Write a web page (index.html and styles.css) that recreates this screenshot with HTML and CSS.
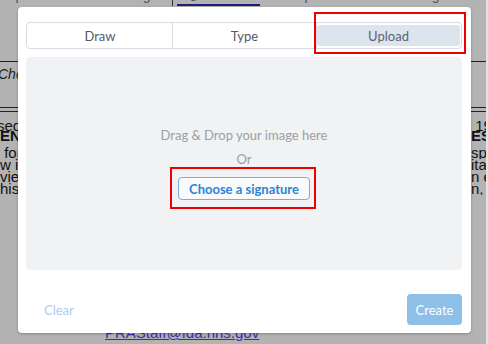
FILE: index.html
```html
<!DOCTYPE html>
<html lang="en">
<head>
<meta charset="utf-8">
<title>Signature</title>
<link rel="stylesheet" href="styles.css">
</head>
<body>
<div class="doc">
  <div class="doc-top">
    <span class="top-left">Responsible Official or Agent</span>
    <span class="top-bar"></span>
    <span class="top-link">Signature</span>
    <span class="top-right">of Responsible Official or Agent</span>
  </div>
  <div class="rule rule-first"></div>
  <div class="check-row"><span class="italic">Che</span></div>
  <div class="rule"></div>
  <div class="rule rule-second"></div>
  <div class="row row-tight row-first"><span>sed</span><span>&nbsp;19</span></div>
  <div class="row row-tight bold"><span>ENI</span><span>ES</span></div>
  <div class="row row-gap"><span>&nbsp;for</span><span>spo</span></div>
  <div class="row"><span>w in</span><span>ita</span></div>
  <div class="row"><span>view</span><span>n e</span></div>
  <div class="row"><span>his</span><span>n, t</span></div>
  <div class="mail-row"><span class="mail">PRAStaff@fda.hhs.gov</span></div>
</div>

<div class="modal">
  <div class="tabs">
    <div class="tab"><span class="tab-label">Draw</span></div>
    <div class="tab"><span class="tab-label">Type</span></div>
    <div class="tab active"><span class="tab-label">Upload</span></div>
  </div>
  <div class="drop">
    <div class="drop-text">Drag &amp; Drop your image here</div>
    <div class="drop-text or">Or</div>
    <button class="choose" type="button">Choose a signature</button>
  </div>
  <div class="footer">
    <button class="clear" type="button">Clear</button>
    <button class="create" type="button">Create</button>
  </div>
</div>

<div class="mark mark-tab"></div>
<div class="mark mark-btn"></div>
</body>
</html>
```

FILE: styles.css
```css
html {
  background: #e2e2e2;
}

body {
  margin: 0;
  width: 488px;
  height: 344px;
  overflow: hidden;
  position: relative;
  font-family: "Liberation Sans", Arial, sans-serif;
}

/* background document (dimmed) */
.doc {
  width: 486px;
  height: 344px;
  background: #b3b3b3;
  color: #111;
  font-size: 15px;
  overflow: hidden;
}

.doc-top {
  display: flex;
  height: 6px;
  overflow: hidden;
  color: #555;
  white-space: nowrap;
  font-size: 14px;
}

.doc-top span {
  line-height: 14px;
  margin-top: -12px;
}

.top-left {
  width: 170px;
  flex: none;
  overflow: hidden;
  direction: rtl;
}

.doc-top .top-bar {
  width: 1px;
  height: 20px;
  background: #333;
  margin-left: 2px;
  flex: none;
}

.doc-top .top-link {
  width: 83px;
  flex: none;
  margin-left: 4px;
  height: 14px;
  margin-top: -10px;
  border-bottom: 2px solid #1f1d7a;
  overflow: hidden;
  line-height: 6px;
}

.top-right {
  margin-left: 4px;
}

.rule {
  height: 1px;
  background: #222;
}

.rule-first {
  margin-top: 55px;
}

.check-row {
  height: 45px;
  line-height: 24px;
  color: #222;
  font-size: 14px;
}

.italic {
  font-style: italic;
  margin-left: -2px;
}

.rule-second {
  margin-top: 3px;
}

.row {
  display: grid;
  grid-template-columns: 1fr 15px;
  line-height: 12px;
  white-space: nowrap;
}

.row span {
  overflow: hidden;
}

.row-tight {
  line-height: 10px;
}

.row-first {
  margin-top: 9px;
}

.row-first span:first-child {
  margin-left: -3px;
}

.row-gap {
  margin-top: 6px;
}

.bold {
  font-weight: 700;
}

.mail-row {
  margin-top: 130px;
  padding-left: 105px;
  font-size: 15px;
  line-height: 15px;
}

.mail {
  color: #3a2fb8;
  text-decoration: underline;
}

/* modal */
.modal {
  position: absolute;
  left: 18px;
  top: 7px;
  width: 453px;
  height: 326px;
  box-sizing: border-box;
  padding: 15px 9px 8px 8px;
  background: #fff;
  border-radius: 4px;
  box-shadow: 0 1px 3px rgba(0, 0, 0, 0.25);
  display: flex;
  flex-direction: column;
  font-family: Lato, "Liberation Sans", sans-serif;
}

.tabs {
  display: grid;
  grid-template-columns: repeat(3, 1fr);
  height: 27px;
  box-sizing: border-box;
  border: 1px solid #d8dde3;
  border-radius: 4px;
  padding: 0 1px;
}

.tab {
  display: flex;
  font-size: 13px;
  color: #555b62;
}

.tab + .tab {
  border-left: 1px solid #d8dde3;
}

.tab-label {
  flex: 1;
  display: flex;
  align-items: center;
  justify-content: center;
  margin: 2px 0;
  border-radius: 3px;
}

.tab.active .tab-label {
  background: #dce4ed;
  color: #5b6570;
}

.drop {
  margin-top: 8px;
  height: 213px;
  box-sizing: border-box;
  padding-top: 70px;
  background: #f1f2f4;
  border-radius: 4px;
  display: flex;
  flex-direction: column;
  align-items: center;
}

.drop-text {
  font-size: 13px;
  line-height: 16px;
  color: #9aa0a6;
}

.or {
  margin-top: 8px;
}

.choose {
  margin-top: 10px;
  height: 23px;
  box-sizing: border-box;
  padding: 0 10px;
  border: 1px solid #76aee0;
  border-radius: 4px;
  background: #f8fafc;
  color: #2d84d3;
  font-family: Lato, "Liberation Sans", sans-serif;
  font-weight: 700;
  font-size: 13px;
}

.footer {
  margin-top: 24px;
  display: flex;
  justify-content: space-between;
  align-items: center;
}

.clear {
  padding: 0 0 0 18px;
  border: 0;
  background: none;
  color: #a8cdee;
  font-family: Lato, "Liberation Sans", sans-serif;
  font-size: 13px;
}

.create {
  width: 55px;
  height: 31px;
  padding: 0;
  border: 0;
  border-radius: 4px;
  background: #8cc0e9;
  color: #fff;
  font-family: Lato, "Liberation Sans", sans-serif;
  font-size: 13px;
}

/* annotation boxes */
.mark {
  position: absolute;
  box-sizing: border-box;
  border: 2px solid #ec0000;
}

.mark-tab {
  left: 314px;
  top: 12px;
  width: 152px;
  height: 42px;
}

.mark-btn {
  left: 170px;
  top: 167px;
  width: 146px;
  height: 42px;
}
```
